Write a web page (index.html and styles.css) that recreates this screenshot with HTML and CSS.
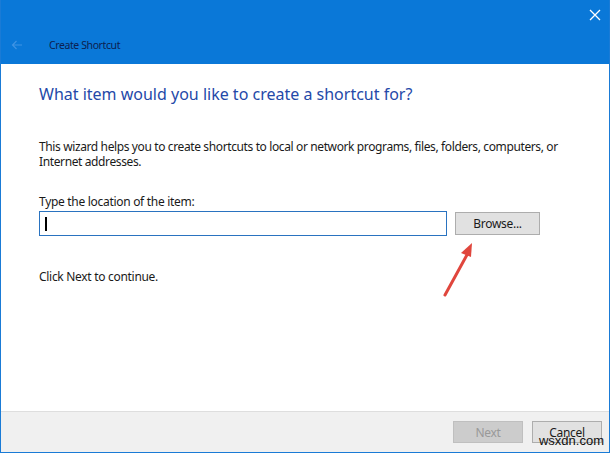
FILE: index.html
```html
<!DOCTYPE html>
<html lang="en">
<head>
    <meta charset="UTF-8">
    <title>Create Shortcut</title>
    <link rel="stylesheet" href="styles.css">
</head>
<body>
    <div class="window">
        <div class="titlebar">
            <div class="title-top">
                <span class="close-btn">
                    <svg width="12" height="12" viewBox="0 0 12 12"><path d="M1 1 L11 11 M11 1 L1 11" stroke="#fff" stroke-width="1.3"/></svg>
                </span>
            </div>
            <div class="title-row">
                <span class="back-btn">
                    <svg width="12" height="10" viewBox="0 0 12 10"><path d="M11 5 H1.5 M5.5 1 L1.5 5 L5.5 9" stroke="#3f93e4" stroke-width="1.2" fill="none"/></svg>
                </span>
                <span class="title-text">Create Shortcut</span>
            </div>
        </div>

        <div class="content">
            <h1 class="instruction">What item would you like to create a shortcut for?</h1>
            <p class="intro">This wizard helps you to create shortcuts to local or network programs, files, folders, computers, or Internet addresses.</p>
            <label class="field-label" for="location">Type the location of the item:</label>
            <div class="field-row">
                <div class="location-input" id="location"><span class="caret"></span></div>
                <button class="btn browse-btn">Browse...</button>
            </div>
            <p class="hint">Click Next to continue.</p>
            <svg class="arrow" width="40" height="60" viewBox="0 0 40 60">
                <path d="M7 54 L30 12" stroke="#e0463d" stroke-width="3" stroke-linecap="round"/>
                <path d="M34 2 L23 12 L33 16 Z" fill="#e0463d"/>
            </svg>
        </div>

        <div class="footer">
            <button class="btn next-btn" disabled>Next</button>
            <button class="btn cancel-btn">Cancel</button>
            <span class="watermark">wsxdn.com</span>
        </div>
    </div>
</body>
</html>
```

FILE: styles.css
```css
body {
    margin: 0;
    background: #fff;
    font-family: "Noto Sans", "Open Sans", sans-serif;
    font-size: 12px;
    color: #1a1a1a;
}
.window {
    width: 608px;
    height: 452px;
    border: 1px solid #1a7bd6;
    border-top: none;
    display: flex;
    flex-direction: column;
    position: relative;
}
.titlebar {
    background-color: #0a78d8;
    height: 64px;
    display: flex;
    flex-direction: column;
}
.title-top {
    height: 30px;
    display: flex;
    justify-content: flex-end;
    align-items: center;
    padding-right: 4px;
}
.close-btn {
    width: 20px;
    height: 20px;
    display: flex;
    align-items: center;
    justify-content: center;
}
.title-row {
    display: flex;
    align-items: center;
    height: 30px;
}
.back-btn {
    width: 48px;
    padding-left: 10px;
    box-sizing: border-box;
    display: flex;
    align-items: center;
}
.title-text {
    color: #0c2150;
    font-size: 10.5px;
    letter-spacing: -0.4px;
}
.content {
    flex: 1;
    padding: 0 38px;
    position: relative;
    letter-spacing: -0.3px;
}
.instruction {
    margin: 19px 0 0;
    font-size: 16px;
    font-weight: normal;
    color: #2449a8;
    letter-spacing: 0;
}
.intro {
    margin: 34px 0 0;
    line-height: 15px;
    width: 540px;
    letter-spacing: -0.38px;
}
.field-label {
    display: block;
    margin-top: 24px;
}
.field-row {
    display: flex;
    align-items: center;
    margin-top: 1px;
}
.location-input {
    width: 401px;
    height: 23px;
    border: 1px solid #2a73c0;
    display: flex;
    align-items: center;
    padding-left: 5px;
    box-sizing: content-box;
}
.caret {
    width: 1.5px;
    height: 14px;
    background: #000;
}
.btn {
    font-family: "Noto Sans", "Open Sans", sans-serif;
    font-size: 12px;
    letter-spacing: -0.3px;
    background-color: #e1e1e1;
    border: 1px solid #adadad;
    color: #1a1a1a;
    padding: 0;
    height: 23px;
}
.browse-btn {
    width: 85px;
    margin-left: 8px;
}
.hint {
    margin: 32px 0 0;
}
.arrow {
    position: absolute;
    left: 437px;
    top: 177px;
}
.footer {
    height: 40px;
    background-color: #f0f0f0;
    border-top: 1px solid #dedede;
    display: flex;
    justify-content: flex-end;
    align-items: center;
    gap: 9px;
    padding-right: 7px;
    position: relative;
}
.next-btn, .cancel-btn {
    width: 70px;
    height: 22px;
}
.next-btn {
    background-color: #cccccc;
    border-color: #bfbfbf;
    color: #999;
}
.watermark {
    position: absolute;
    right: 5px;
    bottom: 5px;
    font-family: "Liberation Sans", sans-serif;
    font-size: 13px;
    color: #111;
    line-height: 13px;
}
```
